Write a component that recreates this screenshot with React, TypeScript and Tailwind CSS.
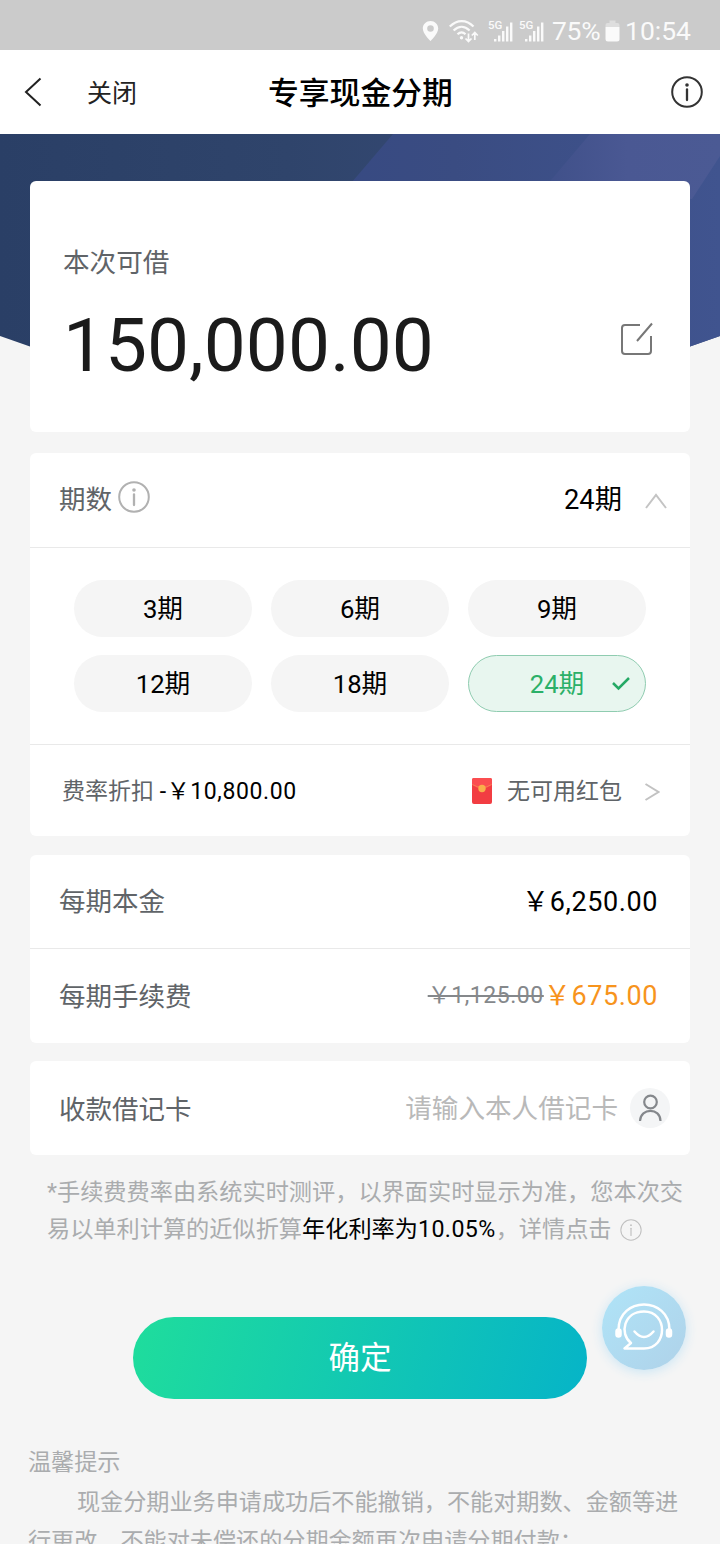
import type { ReactNode } from "react";

const terms = ["3期", "6期", "9期", "12期", "18期", "24期"];

function InfoIcon({ className, width = 1.5 }: { className: string; width?: number }) {
  return (
    <svg viewBox="0 0 32 32" className={className} fill="none" stroke="currentColor" strokeWidth={width}>
      <circle cx="16" cy="16" r="14.8" />
      <path d="M16 13.5V24" strokeLinecap="round" strokeWidth={width * 1.15} />
      <circle cx="16" cy="9" r={width * 0.9} fill="currentColor" stroke="none" />
    </svg>
  );
}

function Signal() {
  return (
    <svg viewBox="0 0 27 24" className="h-6 w-[27px]" fill="#fafafa">
      <text x="0" y="9.5" fontSize="11.5" fontWeight="500" fontFamily="Roboto, sans-serif">5G</text>
      <rect x="6" y="20" width="2.4" height="2.5" />
      <rect x="10" y="16.5" width="2.4" height="6" />
      <rect x="14" y="12" width="2.4" height="10.5" />
      <rect x="18" y="7.5" width="2.4" height="15" />
      <rect x="22" y="3.5" width="2.4" height="19" />
    </svg>
  );
}

function StatusBar() {
  return (
    <div className="flex h-[50px] items-center bg-[#cbcbcb] pl-[422px] pt-3 text-[27px] leading-[36px] text-[#fafafa]">
      <svg viewBox="0 0 17 22" className="h-[22px] w-[17px] shrink-0" fill="#fafafa">
        <path fillRule="evenodd" d="M8.5 1C4.3 1 .8 4.300.8 8.500c0 5.400 7.700 12.500 7.700 12.500s7.700-7.100 7.700-12.500C16.200 4.300 12.700 1 8.500 1Zm0 4.200a3.300 3.300 0 1 1 0 6.600 3.300 3.300 0 0 1 0-6.600Z" />
      </svg>
      <svg viewBox="0 0 30 24" className="ml-2.5 h-6 w-[30px] shrink-0" fill="none" stroke="#fafafa" strokeWidth="2.200">
        <path d="M.8 7.600C8 .2 17.500.2 24.500 7.600M4.600 11.500c5-5 11-5 16 0M8.500 15.300c2.700-2.500 5.500-2.500 8 0" />
        <circle cx="12.500" cy="18.700" r="1.700" fill="#fafafa" stroke="none" />
        <path d="M19.500 14.500V22M16.500 19.500l3 3 3-3M25.800 21V13.500M22.800 16.500l3-3 3 3" strokeWidth="1.700" />
      </svg>
      <span className="ml-[9px] flex shrink-0 gap-1"><Signal /><Signal /></span>
      <span className="ml-[6px] w-[50px] whitespace-nowrap text-[26.5px] tracking-[-0.300px]">75%</span>
      <svg viewBox="0 0 15 22" className="ml-[3px] h-[22px] w-[15px] shrink-0">
        <path d="M4.500.5h6V3h2q2 0 2 2v2H.5V5q0-2 2-2h2Z" fill="#dedede" />
        <path d="M.5 7h14v12q0 2.500-2.500 2.500H3Q.5 21.500.5 19Z" fill="#fafafa" />
      </svg>
      <span className="ml-[5px] whitespace-nowrap text-[26.500px]">10:54</span>
    </div>
  );
}

function Row({ children, className }: { children: ReactNode; className: string }) {
  return <div className={"flex items-center justify-between " + className}>{children}</div>;
}

export default function App() {
  return (
    <div className="h-[1544px] w-[720px] overflow-hidden bg-[#f5f5f5] font-[Roboto,'Noto_Sans_CJK_SC',sans-serif] text-black">
      <StatusBar />
      <header className="flex h-[84px] items-center bg-white">
        <svg viewBox="0 0 18 30" className="ml-6 h-[30px] w-[18px]" fill="none" stroke="#222" strokeWidth="2">
          <path d="M16.500 1.500 2 15l14.500 13.500" />
        </svg>
        <span className="ml-[45px] w-[181px] pt-1 text-[25px] leading-9 text-[#222]">关闭</span>
        <h1 className="w-[403px] pt-1 text-[30.800px] font-medium leading-10">专享现金分期</h1>
        <InfoIcon className="h-8 w-8 text-[#333]" width={2} />
      </header>

      <div className="relative px-[30px] pt-[47px]">
        <svg viewBox="0 0 720 240" className="absolute left-0 top-0 h-[240px] w-[720px]">
          <defs>
            <linearGradient id="heroLeft" x1="0" y1="0" x2="1" y2="0">
              <stop offset="0" stopColor="#2a3f66" />
              <stop offset=".4" stopColor="#2f446b" />
              <stop offset="1" stopColor="#3d4f7e" />
            </linearGradient>
            <linearGradient id="heroRight" x1="0" y1="0" x2="1" y2="0">
              <stop offset="0" stopColor="#344782" />
              <stop offset=".5" stopColor="#3a4c82" />
              <stop offset="1" stopColor="#40548f" />
            </linearGradient>
            <linearGradient id="heroFar" x1="0" y1="0" x2="1" y2="0">
              <stop offset="0" stopColor="#3e4f88" />
              <stop offset=".5" stopColor="#4a5893" />
              <stop offset="1" stopColor="#4b5a94" />
            </linearGradient>
            <clipPath id="heroClip"><path d="M0 0H720V202Q360 334 0 202Z" /></clipPath>
          </defs>
          <g clipPath="url(#heroClip)">
            <rect width="720" height="240" fill="url(#heroLeft)" />
            <path d="M393 0H720V240H188Z" fill="url(#heroRight)" />
            <path d="M590 0H720V22L692 65H535Z" fill="url(#heroFar)" />
          </g>
        </svg>
        <section className="relative flex h-[251px] flex-col rounded-md bg-white pl-[33px] pt-[64px]">
          <span className="text-[26.600px] leading-9 text-[#606468]">本次可借</span>
          <div className="mt-[21px] flex items-center justify-between pr-[36px]">
            <span className="text-[74.800px] leading-[88px] text-[#1b1b1b]">150,000.00</span>
            <svg viewBox="0 0 34 34" className="-mt-[15px] h-[34px] w-[34px]" fill="none" stroke="#777" strokeWidth="2">
              <path d="M20 3H5Q2 3 2 6v23q0 3 3 3h23q3 0 3-3V14M17 19 32 1.500" />
            </svg>
          </div>
        </section>
      </div>

      <main className="px-[30px]">
        <section className="mt-[21px] rounded-md bg-white">
          <Row className="h-[95px] border-b border-[#e9e9e9] pl-[29px] pr-[23px] pb-[3px]">
            <div className="flex items-center text-[26.500px] leading-9 text-[#606468]">
              <span className="pt-0.5">期数</span><InfoIcon className="-mt-1 ml-1.5 h-8 w-8 text-[#b1b1b1]" width={2} />
            </div>
            <div className="flex items-center text-[27.300px] leading-9">
              <span className="pt-0.5">24期</span>
              <svg viewBox="0 0 22 16" className="ml-[23px] mt-1 h-4 w-[22px]" fill="none" stroke="#c4c4c4" strokeWidth="2">
                <path d="m1 15 10-13 10 13" />
              </svg>
            </div>
          </Row>
          <div className="grid h-[197px] grid-cols-[178px_178px_178px] grid-rows-[57px_57px] gap-x-[19px] gap-y-[18px] border-b border-[#e9e9e9] pl-11 pt-8">
            {terms.map((term) =>
              term === "24期" ? (
                <button key={term} className="relative rounded-full border border-[#8fccb0] bg-[#e8f6ef] text-[25.700px] leading-9 text-[#2bb068]">
                  {term}
                  <svg viewBox="0 0 20 16" className="absolute right-3.5 top-5 h-4 w-5" fill="none" stroke="#25a965" strokeWidth="2.500">
                    <path d="m2 7 5.500 5.500L18 2" />
                  </svg>
                </button>
              ) : (
                <button key={term} className="rounded-full bg-[#f5f5f5] text-[25.700px] leading-9">{term}</button>
              ),
            )}
          </div>
          <Row className="h-[91px] pl-8 pr-[30px] text-[23px] leading-8">
            <span className="pt-0.5"><span className="text-[#606468]">费率折扣</span> <span className="tracking-[0.600px]">-￥10,800.00</span></span>
            <span className="flex items-center text-[#606468]">
              <svg viewBox="0 0 20 26" className="mr-[15px] h-[26px] w-5">
                <rect width="20" height="26" rx="2" fill="#f23d42" />
                <path d="M0 2q0-2 2-2h16q2 0 2 2v5q-10 7-20 0Z" fill="#fb4d50" />
                <path d="M.5 6.500q9.500 6 19 0" fill="none" stroke="#f88a50" strokeWidth=".8" />
                <circle cx="10" cy="10.500" r="3.700" fill="#f9ae4b" />
              </svg>
              <span className="pt-0.5">无可用红包</span>
              <svg viewBox="0 0 16 18" className="ml-[22px] mt-0.5 h-[18px] w-4" fill="none" stroke="#c2c2c2" strokeWidth="2">
                <path d="m1.500 1 13 8-13 8" />
              </svg>
            </span>
          </Row>
        </section>

        <section className="mt-[19px] rounded-md bg-white">
          <Row className="h-[94px] border-b border-[#e9e9e9] pl-[29px] pr-8">
            <span className="text-[26.500px] leading-9 text-[#606468]">每期本金</span>
            <span className="text-[27px] leading-9 tracking-[0.600px]">￥6,250.00</span>
          </Row>
          <Row className="h-[94px] pl-[29px] pr-8">
            <span className="pt-px text-[26.500px] leading-9 text-[#606468]">每期手续费</span>
            <span className="flex items-center">
              <del className="text-[23px] leading-9 tracking-[0.550px] text-[#85888b]">￥1,125.00</del>
              <span className="text-[27px] leading-9 tracking-[0.600px] text-[#f7941d]">￥675.00</span>
            </span>
          </Row>
        </section>

        <section className="mt-[18px] flex h-[94px] items-center justify-between rounded-md bg-white pl-[29px] pr-5">
          <span className="pt-1 text-[26.500px] leading-9 text-[#606468]">收款借记卡</span>
          <div className="flex items-center gap-3">
            <span className="pt-0.5 text-[26.600px] leading-9 text-[#b9b9b9]">请输入本人借记卡</span>
            <span className="flex h-10 w-10 items-center justify-center rounded-full bg-[#f4f5f6]">
              <svg viewBox="0 0 24 28" className="h-7 w-6" fill="none" stroke="#85888c" strokeWidth="2.200">
                <circle cx="12.500" cy="8" r="6.300" />
                <path d="M2 27C2.500 13.500 22.500 13.500 22.500 27" />
              </svg>
            </span>
          </div>
        </section>
      </main>

      <p className="mt-[19px] whitespace-nowrap pl-[47px] text-[23.200px] leading-[37px] text-[#aaacae]">
        *手续费费率由系统实时测评，以界面实时显示为准，您本次交
        <span className="flex items-center">
          易以单利计算的近似折算<span className="text-black">年化利率为<span className="tracking-[0.400px]">10.05%</span></span>，详情点击
          <InfoIcon className="ml-2 h-[22px] w-[22px] text-[#c0c0c0]" />
        </span>
      </p>

      <div className="relative mt-[69px] flex justify-center">
        <button className="h-[82px] w-[454px] rounded-full bg-[linear-gradient(105deg,#1fdd9c,#06b4c8)] pt-0.5 text-[31.500px] leading-10 text-white">确定</button>
        <button className="absolute -top-[31px] left-[602px] h-[84px] w-[84px] rounded-full bg-linear-to-br from-[#afe4f8] to-[#afd2e9] shadow-[0_2px_12px_#c8e5f5]">
          <svg viewBox="0 0 84 84" className="h-[84px] w-[84px]" fill="none" stroke="white" strokeWidth="2.500" strokeLinecap="round">
            <path d="M16.500 44C16.500 10 67.500 10 67.500 44" />
            <rect x="14.500" y="43.500" width="4" height="7" rx="2" fill="white" />
            <rect x="65" y="43.500" width="4" height="7" rx="2" fill="white" />
            <path d="M22.500 62.500H42C66 62.500 66 25.500 42 25.500c-20 0-25 22-13 31.500l-6.500 5.500ZM32.500 45.500q9.500 11 19 0" strokeLinejoin="round" />
          </svg>
        </button>
      </div>

      <footer className="whitespace-nowrap pl-7 pt-[44px] text-[23.130px] leading-[39px] text-[#aaacae]">
        <p>温馨提示</p>
        <p className="pl-[49px] pt-px">现金分期业务申请成功后不能撤销，不能对期数、金额等进</p>
        <p>行更改，不能对未偿还的分期金额再次申请分期付款；</p>
      </footer>
    </div>
  );
}
